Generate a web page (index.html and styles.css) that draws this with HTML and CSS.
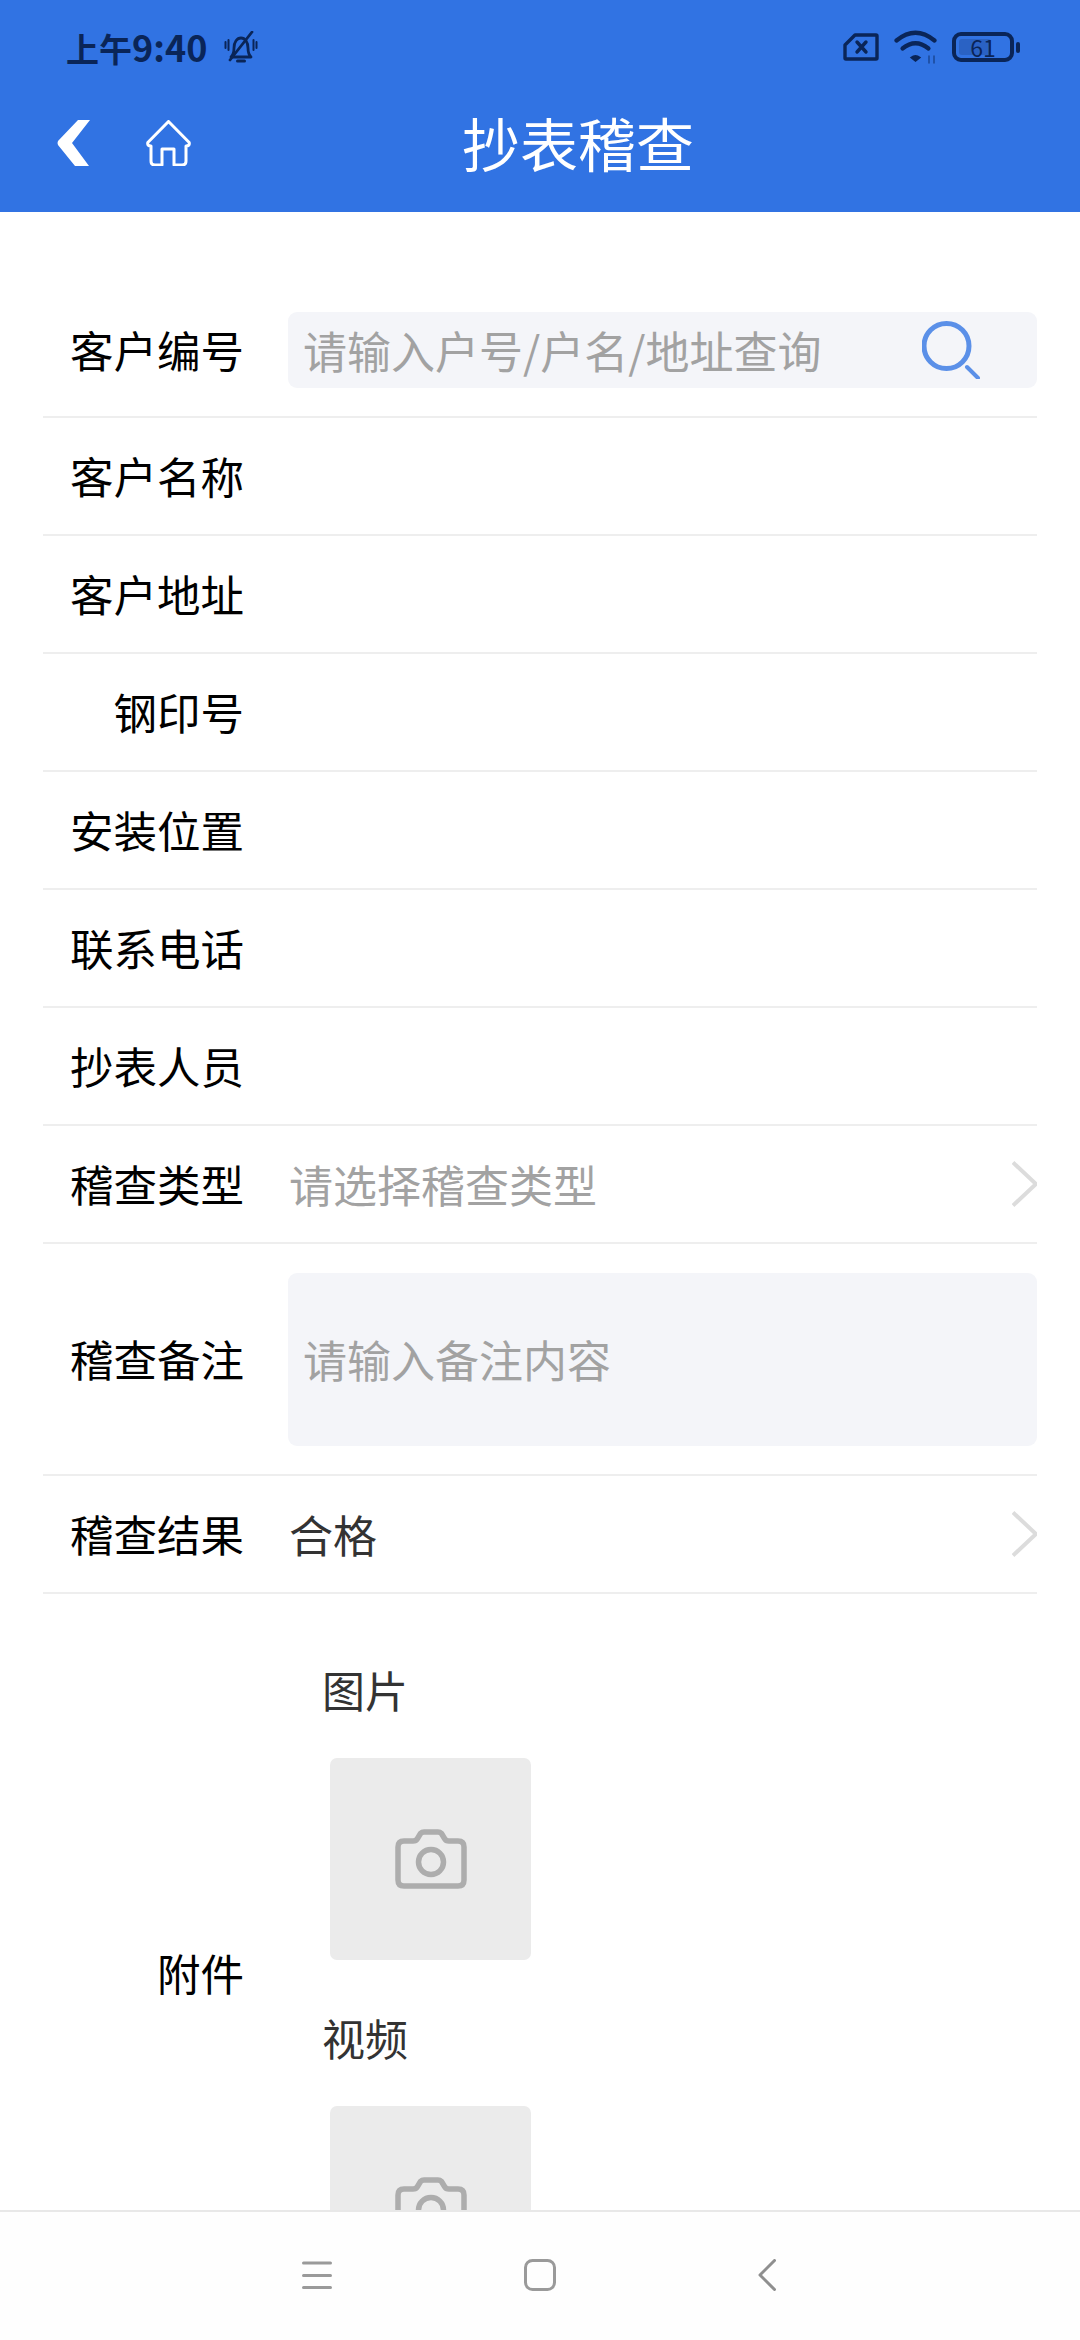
FILE: index.html
```html
<!DOCTYPE html>
<html lang="zh-CN">
<head>
<meta charset="utf-8">
<title>抄表稽查</title>
<link rel="stylesheet" href="styles.css">
</head>
<body>
<div class="app">
  <header class="header">
    <div class="status">
      <div class="status-left">
        <span class="time">上午<span class="time-digits">9:40</span></span>
        <svg class="bell" viewBox="0 0 34 32" fill="none" stroke="#0a2558" stroke-width="2.8" stroke-linecap="round" stroke-linejoin="round">
          <path d="M7 26c2-2 3-4 3-9 0-6 3-10 7-10s7 4 7 10c0 5 1 7 3 9z"/>
          <path d="M13.500 30h7" stroke-width="3"/>
          <path d="M28 1 6 29"/>
          <path d="M1.500 11v6M4.500 9v10M29.500 9v10M32.500 11v6" stroke-width="2"/>
        </svg>
      </div>
      <div class="status-right">
        <svg class="sim" viewBox="0 0 36 28" fill="none" stroke="#0a2558" stroke-width="3.400" stroke-linejoin="round" stroke-linecap="round">
          <path d="M12 2h21a1 1 0 0 1 1 1v22a1 1 0 0 1-1 1H3a1 1 0 0 1-1-1V12z"/>
          <path d="M14 9l9 10M23 9l-9 10"/>
        </svg>
        <svg class="wifi" viewBox="0 0 43 34" fill="none" stroke="#0a2558" stroke-linecap="round">
          <path d="M2.500 10.500Q21.500 -5 40.500 10.500" stroke-width="4.200"/>
          <path d="M8.500 18.500Q21.500 8 34.500 18.500" stroke-width="4.200"/>
          <path d="M17 27.500Q21.500 24 26 27.500L21.500 31z" fill="#0a2558" stroke-width="1.500"/>
          <path d="M35 26v7M40 26v7" stroke-width="1.500" opacity=".55"/>
        </svg>
        <div class="battery">
          <div class="battery-body">
            <span class="battery-fill"></span>
            <span class="battery-num">61</span>
          </div>
          <span class="battery-cap"></span>
        </div>
      </div>
    </div>
    <div class="toolbar">
      <svg class="back" viewBox="0 0 33 46" fill="#fff">
        <path d="M21 0H33L15 23 32 46H18L1 25Q0 23 1 21z"/>
      </svg>
      <svg class="home" viewBox="0 0 45 46" fill="none" stroke="#fff" stroke-width="3" stroke-linejoin="round">
        <path d="M22.500 1.500 1.800 22.500Q1 26 5 26V41Q5 45 9 45H16V29H28V45H36Q40 45 40 41V26Q44 26 43.200 22.500z"/>
      </svg>
      <h1 class="title">抄表稽查</h1>
    </div>
  </header>

  <main class="main">
    <div class="row row-search">
      <span class="label">客户编号</span>
      <div class="field search-field">
        <span class="placeholder">请输入户号/户名/地址查询</span>
        <svg class="search-icon" viewBox="0 0 58 58" fill="none" stroke="#5b90e8" stroke-linecap="round">
          <circle cx="24.500" cy="25" r="22.500" stroke-width="5"/>
          <path d="M45 46l11 11" stroke-width="4"/>
        </svg>
      </div>
    </div>
    <div class="row"><span class="label">客户名称</span></div>
    <div class="row"><span class="label">客户地址</span></div>
    <div class="row"><span class="label">钢印号</span></div>
    <div class="row"><span class="label">安装位置</span></div>
    <div class="row"><span class="label">联系电话</span></div>
    <div class="row"><span class="label">抄表人员</span></div>
    <div class="row">
      <span class="label">稽查类型</span>
      <span class="value placeholder">请选择稽查类型</span>
      <svg class="chevron" viewBox="0 0 25 46" fill="none" stroke="#dcdcdc" stroke-width="4">
        <path d="M1 1.500 24 23 1 44.500"/>
      </svg>
    </div>
    <div class="row row-note">
      <span class="label">稽查备注</span>
      <div class="field note-field"><span class="placeholder">请输入备注内容</span></div>
    </div>
    <div class="row">
      <span class="label">稽查结果</span>
      <span class="value">合格</span>
      <svg class="chevron" viewBox="0 0 25 46" fill="none" stroke="#dcdcdc" stroke-width="4">
        <path d="M1 1.500 24 23 1 44.500"/>
      </svg>
    </div>
    <div class="attach">
      <span class="label">附件</span>
      <div class="attach-col">
        <section class="attach-group">
          <div class="attach-name">图片</div>
          <div class="upload">
            <svg class="camera" viewBox="0 0 72 60" fill="none" stroke="#adadad" stroke-width="5.500" stroke-linejoin="round">
              <path d="M9 12H18Q21 12 22.500 9.500L25.500 4.500Q27 3 29 3H43Q45 3 46.500 4.500L49.500 9.500Q51 12 54 12H63Q69 12 69 18V51Q69 57 63 57H9Q3 57 3 51V18Q3 12 9 12z"/>
              <circle cx="36" cy="33" r="12.500"/>
            </svg>
          </div>
        </section>
        <section class="attach-group">
          <div class="attach-name">视频</div>
          <div class="upload">
            <svg class="camera" viewBox="0 0 72 60" fill="none" stroke="#adadad" stroke-width="5.500" stroke-linejoin="round">
              <path d="M9 12H18Q21 12 22.500 9.500L25.500 4.500Q27 3 29 3H43Q45 3 46.500 4.500L49.500 9.500Q51 12 54 12H63Q69 12 69 18V51Q69 57 63 57H9Q3 57 3 51V18Q3 12 9 12z"/>
              <circle cx="36" cy="33" r="12.500"/>
            </svg>
          </div>
        </section>
      </div>
    </div>
  </main>

  <nav class="nav">
    <svg class="nav-menu" viewBox="0 0 30 28" fill="none" stroke="#9a9a9a" stroke-width="3" stroke-linecap="round">
      <path d="M1.500 2h27M1.500 14.500h27M1.500 26.500h27"/>
    </svg>
    <svg class="nav-home" viewBox="0 0 32 32" fill="none" stroke="#9a9a9a" stroke-width="3">
      <rect x="1.500" y="1.500" width="29" height="29" rx="7"/>
    </svg>
    <svg class="nav-back" viewBox="0 0 18 32" fill="none" stroke="#8f8f8f" stroke-width="3" stroke-linecap="round" stroke-linejoin="round">
      <path d="M16.500 1.500 2 16l14.500 14.500"/>
    </svg>
  </nav>
</div>
</body>
</html>
```
FILE: styles.css
```css
* { box-sizing: border-box; }
html, body { margin: 0; padding: 0; }
body {
  width: 1080px;
  height: 2340px;
  overflow: hidden;
  background: #fff;
  font-family: "Noto Sans CJK SC", "Noto Sans", sans-serif;
}
.app { display: flex; flex-direction: column; height: 2340px; }

.header { flex: none; height: 212px; background: #3173e3; }
.status {
  display: flex;
  justify-content: space-between;
  align-items: center;
  height: 96px;
  padding: 0 60px 2px 66px;
}
.status-left { display: flex; align-items: center; gap: 17px; }
.time { font-size: 33px; font-weight: 700; line-height: 40px; color: #0a2558; }
.time-digits { font-size: 36px; }
.bell { width: 34px; height: 32px; }
.status-right { display: flex; align-items: center; gap: 15px; }
.sim { width: 36px; height: 28px; }
.wifi { width: 43px; height: 34px; }
.battery { display: flex; align-items: center; gap: 2px; }
.battery-body {
  display: flex;
  align-items: center;
  justify-content: center;
  width: 62px;
  height: 30px;
  padding: 3px;
  border: 4px solid #0a2558;
  border-radius: 9px;
  position: relative;
}
.battery-fill {
  position: absolute;
  left: 3px;
  top: 3px;
  bottom: 3px;
  width: 32px;
  background: #2a62c4;
  border-radius: 3px;
}
.battery-num { position: relative; font-size: 23px; line-height: 22px; color: #0a2558; }
.battery-cap { width: 4px; height: 11px; background: #0a2558; border-radius: 2px; }

.toolbar { display: flex; align-items: flex-start; height: 116px; padding: 24px 0 0 57px; }
.back { flex: none; width: 33px; height: 46px; }
.home { flex: none; width: 45px; height: 46px; margin-left: 56px; }
.title {
  margin: -9px 0 0 271px;
  font-size: 58px;
  font-weight: 400;
  line-height: 62px;
  color: #fff;
}

.main { flex: 1; min-height: 0; overflow: hidden; padding: 88px 43px 0; }
.row {
  display: flex;
  align-items: center;
  height: 118px;
  border-bottom: 2px solid #eeeeee;
}
.row-search { padding-bottom: 16px; }
.row-note { height: 232px; }
.label {
  flex: none;
  width: 201px;
  font-size: 43.500px;
  line-height: 60px;
  text-align: right;
  color: #000;
}
.value { flex: 1; margin-left: 45px; font-size: 44px; line-height: 60px; color: #333; }
.placeholder { font-size: 44px; line-height: 60px; color: #a2a2a2; }
.value.placeholder { color: #a2a2a2; }
.chevron { flex: none; width: 25px; height: 46px; }
.field {
  flex: 1;
  display: flex;
  align-items: center;
  margin-left: 44px;
  padding-left: 15px;
  background: #f4f5f9;
  border-radius: 9px;
}
.search-field { justify-content: space-between; height: 76px; padding-right: 57px; }
.search-icon { flex: none; width: 58px; height: 58px; }
.note-field { height: 173px; }

.attach { display: flex; align-items: center; }
.attach-col { margin-left: 78px; padding: 66px 0 44px; }
.attach-group + .attach-group { margin-top: 48px; }
.attach-name { font-size: 43px; line-height: 58px; color: #333; }
.upload {
  display: flex;
  align-items: center;
  justify-content: center;
  width: 201px;
  height: 202px;
  margin: 40px 0 0 8px;
  background: #ebebeb;
  border-radius: 7px;
}
.camera { width: 72px; height: 60px; }

.nav {
  flex: none;
  display: flex;
  align-items: center;
  height: 130px;
  padding: 0 0 2px 302px;
  background: #fefefe;
  border-top: 2px solid #e8e8e8;
}
.nav-menu { width: 30px; height: 28px; }
.nav-home { width: 32px; height: 32px; margin-left: 192px; }
.nav-back { width: 18px; height: 32px; margin-left: 202px; }
```
